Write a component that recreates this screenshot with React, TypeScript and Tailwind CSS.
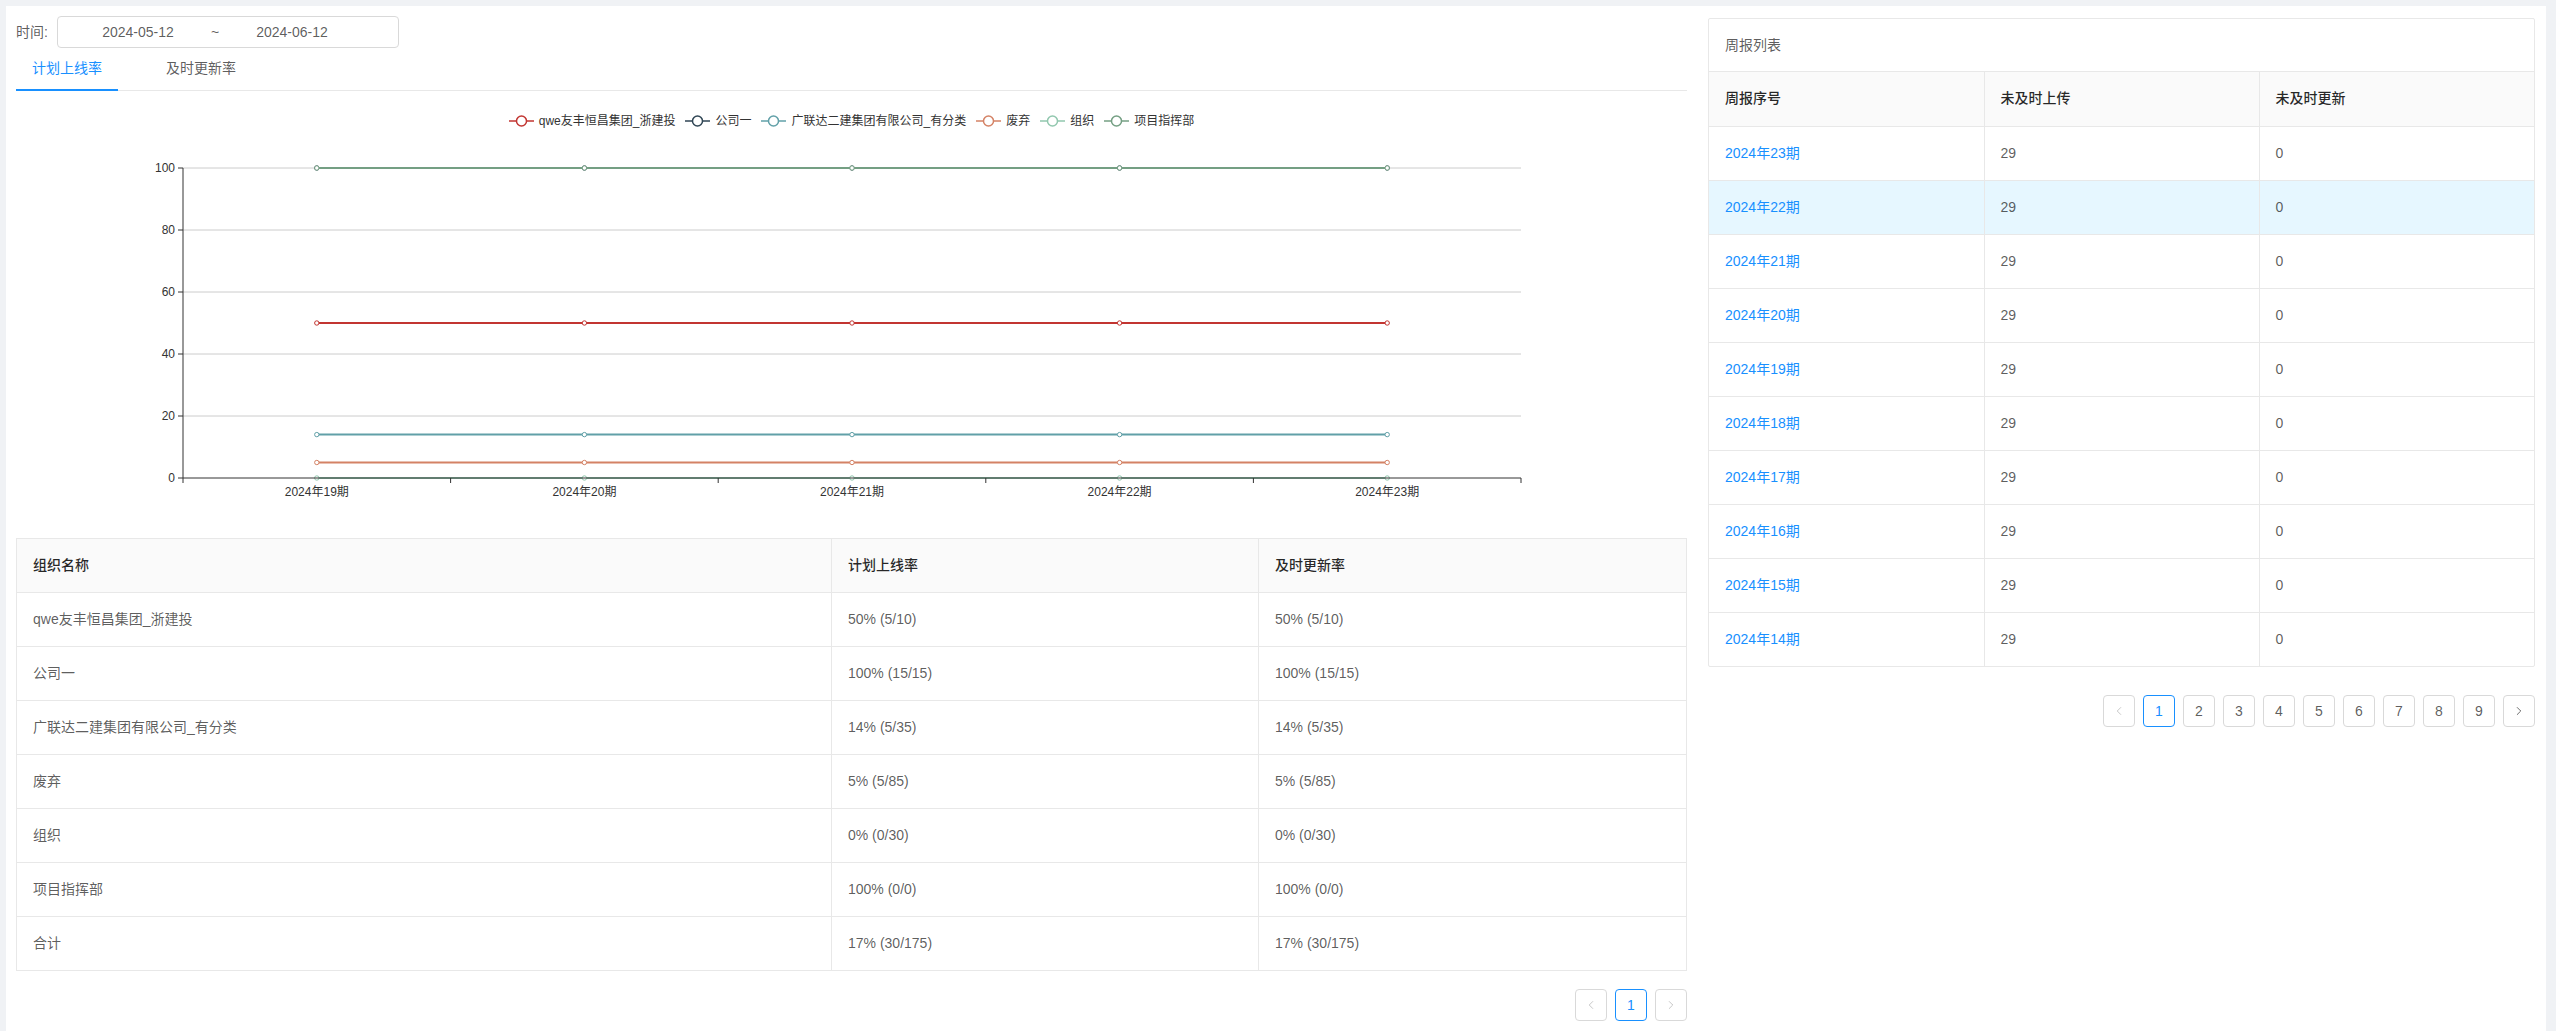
import React from 'react';
import { ChevronLeft, ChevronRight } from 'lucide-react';

const series = [
  { name: 'qwe友丰恒昌集团_浙建投', color: '#c23531', value: 50 },
  { name: '公司一', color: '#2f4554', value: 100 },
  { name: '广联达二建集团有限公司_有分类', color: '#61a0a8', value: 14 },
  { name: '废弃', color: '#d48265', value: 5 },
  { name: '组织', color: '#91c7ae', value: 0 },
  { name: '项目指挥部', color: '#749f83', value: 100 },
];

const periods = ['2024年19期', '2024年20期', '2024年21期', '2024年22期', '2024年23期'];

const orgRows = [
  ['qwe友丰恒昌集团_浙建投', '50% (5/10)', '50% (5/10)'],
  ['公司一', '100% (15/15)', '100% (15/15)'],
  ['广联达二建集团有限公司_有分类', '14% (5/35)', '14% (5/35)'],
  ['废弃', '5% (5/85)', '5% (5/85)'],
  ['组织', '0% (0/30)', '0% (0/30)'],
  ['项目指挥部', '100% (0/0)', '100% (0/0)'],
  ['合计', '17% (30/175)', '17% (30/175)'],
];

const weeks = [23, 22, 21, 20, 19, 18, 17, 16, 15, 14];

// chart geometry (svg coords)
const X0 = 167;
const X1 = 1505;
const STEP = (X1 - X0) / 5;
const yOf = (v: number) => 17 + (100 - v) * 3.1;

const LegendIcon = ({ color }: { color: string }) => (
  <svg width="25" height="14" viewBox="0 0 25 14">
    <line x1="0" y1="7" x2="25" y2="7" stroke={color} strokeWidth="1.5" />
    <circle cx="12.5" cy="7" r="5" fill="#fff" stroke={color} strokeWidth="1.5" />
  </svg>
);

const Chart = () => (
  <div className="flex flex-col">
    <div className="h-[60px] flex items-center justify-center gap-[10px] text-[12px] text-[#333]">
      {series.map((s) => (
        <div key={s.name} className="flex items-center gap-[5px]">
          <LegendIcon color={s.color} />
          <span>{s.name}</span>
        </div>
      ))}
    </div>
    <svg width="1671" height="387" className="block">
      {[20, 40, 60, 80, 100].map((v) => (
        <line key={v} x1={X0} x2={X1} y1={yOf(v)} y2={yOf(v)} stroke="#cccccc" strokeWidth="1" />
      ))}
      <line x1={X0} x2={X0} y1={yOf(100)} y2={yOf(0)} stroke="#333" strokeWidth="1" />
      {[0, 20, 40, 60, 80, 100].map((v) => (
        <g key={v}>
          <line x1={X0 - 5} x2={X0} y1={yOf(v)} y2={yOf(v)} stroke="#333" strokeWidth="1" />
          <text x={X0 - 8} y={yOf(v) + 4} textAnchor="end" fontSize="12" fill="#333">
            {v}
          </text>
        </g>
      ))}
      {series.map((s) => (
        <g key={s.name}>
          <line
            x1={X0 + STEP * 0.5}
            x2={X0 + STEP * 4.5}
            y1={yOf(s.value)}
            y2={yOf(s.value)}
            stroke={s.color}
            strokeWidth="2"
          />
          {periods.map((p, i) => (
            <circle key={p} cx={X0 + STEP * (i + 0.5)} cy={yOf(s.value)} r="2.2" fill="#fff" stroke={s.color} strokeWidth="1" />
          ))}
        </g>
      ))}
      <line x1={X0} x2={X1} y1={yOf(0)} y2={yOf(0)} stroke="#333" strokeWidth="1" />
      {[0, 1, 2, 3, 4, 5].map((i) => (
        <line key={i} x1={X0 + STEP * i} x2={X0 + STEP * i} y1={yOf(0)} y2={yOf(0) + 5} stroke="#333" strokeWidth="1" />
      ))}
      {periods.map((p, i) => (
        <text key={p} x={X0 + STEP * (i + 0.5)} y={yOf(0) + 18} textAnchor="middle" fontSize="12" fill="#333">
          {p}
        </text>
      ))}
    </svg>
  </div>
);

const PageBtn = ({ children, active, disabled }: { children: React.ReactNode; active?: boolean; disabled?: boolean }) => (
  <div
    className={`w-8 h-8 flex items-center justify-center rounded border bg-white text-[14px] ${
      active ? 'border-[#1890ff] text-[#1890ff]' : disabled ? 'border-[#d9d9d9] text-black/25' : 'border-[#d9d9d9] text-black/65'
    }`}
  >
    {children}
  </div>
);

const Pagination = ({ pages, nextEnabled }: { pages: number; nextEnabled?: boolean }) => (
  <div className="flex justify-end gap-2">
    <PageBtn disabled>
      <ChevronLeft size={14} strokeWidth={1.5} />
    </PageBtn>
    {Array.from({ length: pages }, (_, i) => (
      <PageBtn key={i} active={i === 0}>
        {i + 1}
      </PageBtn>
    ))}
    <PageBtn disabled={!nextEnabled}>
      <ChevronRight size={14} strokeWidth={1.5} />
    </PageBtn>
  </div>
);

export default function App() {
  return (
    <div className="min-h-[1031px] bg-[#f0f2f5] pl-[6px] pt-[6px] pr-[10px] font-['Liberation_Sans','Noto_Sans_CJK_SC',sans-serif]">
      <div className="min-h-[1025px] bg-white pl-[10px] pr-[11px] pt-[10px] flex gap-[21px] items-start">
        {/* Left column */}
        <div className="w-[1671px] flex flex-col">
          <div className="flex items-center h-8 text-[14px] text-black/65">
            <span className="w-[41px]">时间:</span>
            <div className="w-[342px] h-8 border border-[#d9d9d9] rounded flex items-center pl-[10px]">
              <span className="w-[140px] text-center">2024-05-12</span>
              <span className="w-[14px] text-center">~</span>
              <span className="w-[140px] text-center">2024-06-12</span>
            </div>
          </div>

          <div className="flex border-b border-[#e8e8e8] text-[14px]">
            <div className="px-4 py-[10px] text-[#1890ff] border-b-2 border-[#1890ff] -mb-px">计划上线率</div>
            <div className="ml-8 px-4 py-[10px] text-black/65">及时更新率</div>
          </div>

          <Chart />

          <table className="w-full table-fixed border-t border-l border-[#e8e8e8] text-[14px]">
            <colgroup>
              <col className="w-[815px]" />
              <col className="w-[427px]" />
              <col />
            </colgroup>
            <thead>
              <tr className="bg-[#fafafa] text-black/85">
                {['组织名称', '计划上线率', '及时更新率'].map((h) => (
                  <th key={h} className="h-[54px] px-4 text-left font-medium border-r border-b border-[#e8e8e8]">
                    {h}
                  </th>
                ))}
              </tr>
            </thead>
            <tbody>
              {orgRows.map((r) => (
                <tr key={r[0]} className="text-black/65">
                  {r.map((c, i) => (
                    <td key={i} className="h-[54px] px-4 border-r border-b border-[#e8e8e8]">
                      {c}
                    </td>
                  ))}
                </tr>
              ))}
            </tbody>
          </table>

          <div className="mt-[18px]">
            <Pagination pages={1} />
          </div>
        </div>

        {/* Right column */}
        <div className="w-[827px] mt-[2px] flex flex-col">
          <div className="border border-[#e8e8e8] rounded-[2px] text-[14px]">
            <div className="h-[53px] px-4 flex items-center text-black/65 border-b border-[#e8e8e8]">周报列表</div>
            <table className="w-full table-fixed">
              <thead>
                <tr className="bg-[#fafafa] text-black/85">
                  {['周报序号', '未及时上传', '未及时更新'].map((h, i) => (
                    <th
                      key={h}
                      className={`h-[54px] px-4 text-left font-medium border-b border-[#e8e8e8] ${i < 2 ? 'border-r' : ''}`}
                    >
                      {h}
                    </th>
                  ))}
                </tr>
              </thead>
              <tbody>
                {weeks.map((w, ri) => (
                  <tr key={w} className={`text-black/65 ${w === 22 ? 'bg-[#e6f7ff]' : ''}`}>
                    <td className={`h-[54px] px-4 border-r border-[#e8e8e8] text-[#1890ff] ${ri < weeks.length - 1 ? 'border-b' : ''}`}>
                      2024年{w}期
                    </td>
                    <td className={`h-[54px] px-4 border-r border-[#e8e8e8] ${ri < weeks.length - 1 ? 'border-b' : ''}`}>29</td>
                    <td className={`h-[54px] px-4 border-[#e8e8e8] ${ri < weeks.length - 1 ? 'border-b' : ''}`}>0</td>
                  </tr>
                ))}
              </tbody>
            </table>
          </div>
          <div className="mt-[28px]">
            <Pagination pages={9} nextEnabled />
          </div>
        </div>
      </div>
    </div>
  );
}
